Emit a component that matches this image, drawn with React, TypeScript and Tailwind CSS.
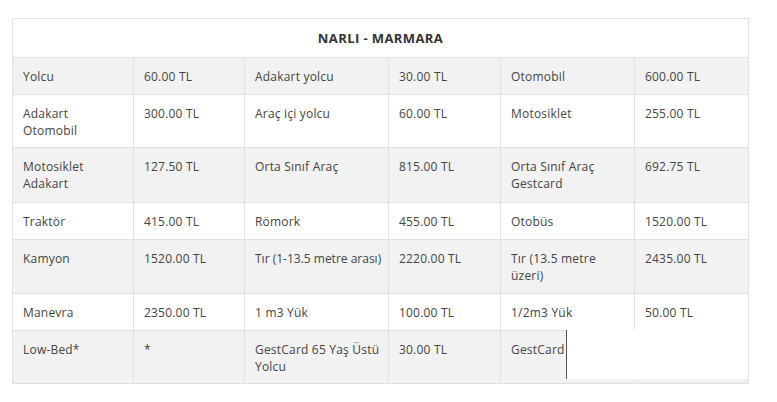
import React from "react";

const rows: string[][] = [
  ["Yolcu", "60.00 TL", "Adakart yolcu", "30.00 TL", "Otomobil", "600.00 TL"],
  ["Adakart\nOtomobil", "300.00 TL", "Araç içi yolcu", "60.00 TL", "Motosiklet", "255.00 TL"],
  ["Motosiklet\nAdakart", "127.50 TL", "Orta Sınıf Araç", "815.00 TL", "Orta Sınıf Araç\nGestcard", "692.75 TL"],
  ["Traktör", "415.00 TL", "Römork", "455.00 TL", "Otobüs", "1520.00 TL"],
  ["Kamyon", "1520.00 TL", "Tır (1-13.5 metre arası)", "2220.00 TL", "Tır (13.5 metre\nüzeri)", "2435.00 TL"],
  ["Manevra", "2350.00 TL", "1 m3 Yük", "100.00 TL", "1/2m3 Yük", "50.00 TL"],
  ["Low-Bed*", "*", "GestCard 65 Yaş Üstü\nYolcu", "30.00 TL", "GestCard", ""],
];

const widths = [121, 111, 144, 112, 134, 114];
const pbs = ["pb-[9px]", "pb-[8px]", "pb-[10px]", "pb-[9px]", "pb-[9px]", "pb-[9px]", "pb-[8px]"];

export default function App() {
  return (
    <div
      className="relative w-[777px] h-[402px] bg-white"
      style={{ fontFamily: '"Open Sans", "DejaVu Sans", sans-serif' }}
    >
      <div className="pt-[18px] pl-[12px]">
        <table className="table-fixed border-collapse w-[736px] text-[12px] tracking-[0.2px] text-[#444]">
          <colgroup>
            {widths.map((w, i) => (
              <col key={i} style={{ width: w }} />
            ))}
          </colgroup>
          <thead>
            <tr>
              <th
                colSpan={6}
                className="border border-[#dee2e6] bg-white text-center font-bold text-[13px] tracking-[0.4px] text-[#333] leading-[17px] pt-[11px] pb-[10px]"
              >
                NARLI - MARMARA
              </th>
            </tr>
          </thead>
          <tbody>
            {rows.map((r, i) => (
              <tr key={i} className={i % 2 === 0 ? "bg-[#f2f2f2]" : "bg-white"}>
                {r.map((c, j) => (
                  <td
                    key={j}
                    className={
                      "border border-[#dee2e6] align-top text-left leading-[17px] pt-[10px] px-[10px] whitespace-pre " +
                      pbs[i] +
                      (c.startsWith("Tır (1-") ? " tracking-normal" : "")
                    }
                  >
                    {c}
                  </td>
                ))}
              </tr>
            ))}
          </tbody>
        </table>
      </div>
      <div className="absolute left-[566px] top-[330px] w-[182px] h-[49px] bg-white border-l border-[#555]" />
    </div>
  );
}
